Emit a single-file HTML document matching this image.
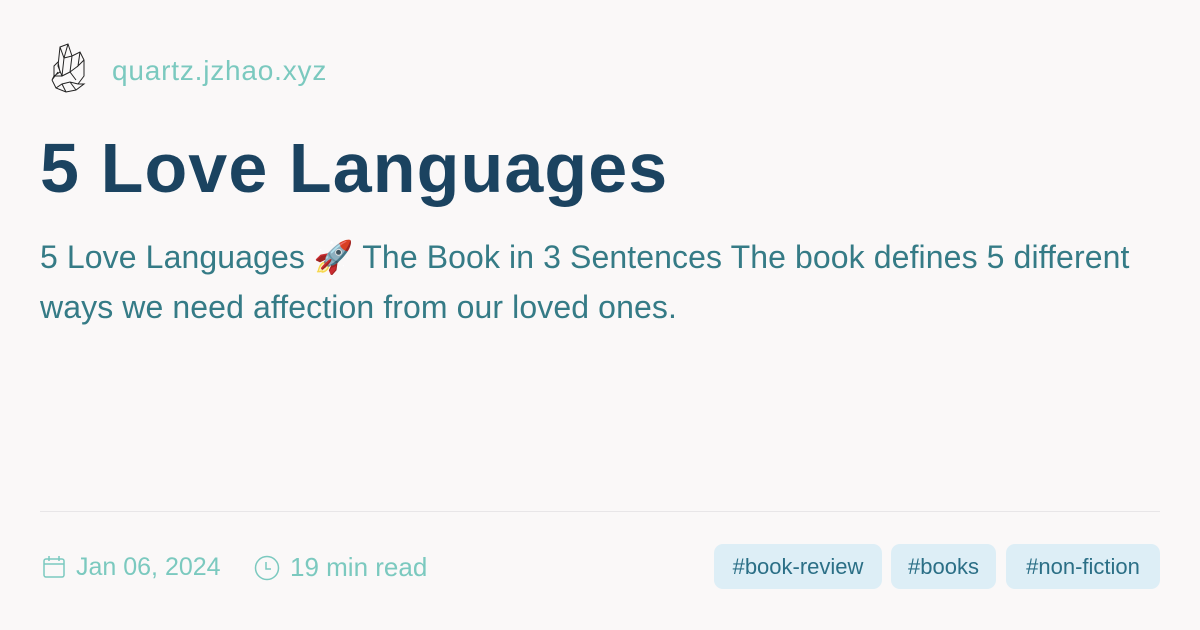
<!DOCTYPE html>
<html><head><style>
body{margin:0;width:1200px;height:630px;background:#faf8f8;font-family:"Liberation Sans",sans-serif;position:relative;overflow:hidden}
.logo{position:absolute;left:48px;top:42px}
.site{position:absolute;left:112px;top:54px;font-size:28px;letter-spacing:0.8px;color:#7bc9bf;line-height:34px}
h1{position:absolute;left:40px;top:126px;margin:0;font-size:70px;font-weight:bold;color:#1b4360;line-height:84px;letter-spacing:1.1px}
.desc{position:absolute;left:40px;top:232px;width:1125px;font-size:32px;line-height:50px;color:#357b86;letter-spacing:0.1px}
.rule{position:absolute;left:40px;top:511px;width:1120px;height:1px;background:#e8e6e8}
.meta{position:absolute;top:550px;font-size:26px;color:#7bc9bf;line-height:34px}
.tag{position:absolute;top:544px;height:45px;background:#ddeef6;border-radius:9px;color:#2b6f86;font-size:22px;line-height:45px;text-align:center}
</style></head><body>
<svg class="logo" width="40" height="52" viewBox="0 0 40 52" fill="none" stroke="#222" stroke-width="1">
<path d="M12 5 L20 2 L24 14 L22 30 L14 34 L10 24 Z M12 5 L16 16 L20 2 M16 16 L14 34 M16 16 L24 14 M24 14 L32 10 L36 18 L36 34 L30 42 M32 10 L30 24 L36 18 M22 30 L30 24 M6 24 L10 20 L12 30 L6 34 Z M6 34 L14 34 L22 30 L28 38 M4 38 L10 30 M4 38 L8 46 L18 50 L28 48 L36 42 L30 42 L22 40 L14 42 L8 46 M14 42 L18 50 M22 40 L28 48 M6 34 L4 38"/>
</svg>
<div class="site">quartz.jzhao.xyz</div>
<h1>5 Love Languages</h1>
<div class="desc">5 Love Languages 🚀 The Book in 3 Sentences The book defines 5 different ways we need affection from our loved ones.</div>
<div class="rule"></div>
<svg style="position:absolute;left:42px;top:555px" width="24" height="24" viewBox="0 0 24 24" fill="none" stroke="#7bc9bf" stroke-width="1.5"><rect x="2" y="4" width="20" height="18" rx="2"/><path d="M2 9h20M7 1v5M17 1v5"/></svg>
<div class="meta" style="left:76px;font-size:25px">Jan 06, 2024</div>
<svg style="position:absolute;left:254px;top:555px" width="26" height="26" viewBox="0 0 26 26" fill="none" stroke="#7bc9bf" stroke-width="1.5"><circle cx="13" cy="13" r="11.5"/><path d="M12 7v7h5"/></svg>
<div class="meta" style="left:290px">19 min read</div>
<div class="tag" style="left:714px;width:168px">#book-review</div>
<div class="tag" style="left:891px;width:105px">#books</div>
<div class="tag" style="left:1006px;width:154px">#non-fiction</div>
</body></html>
